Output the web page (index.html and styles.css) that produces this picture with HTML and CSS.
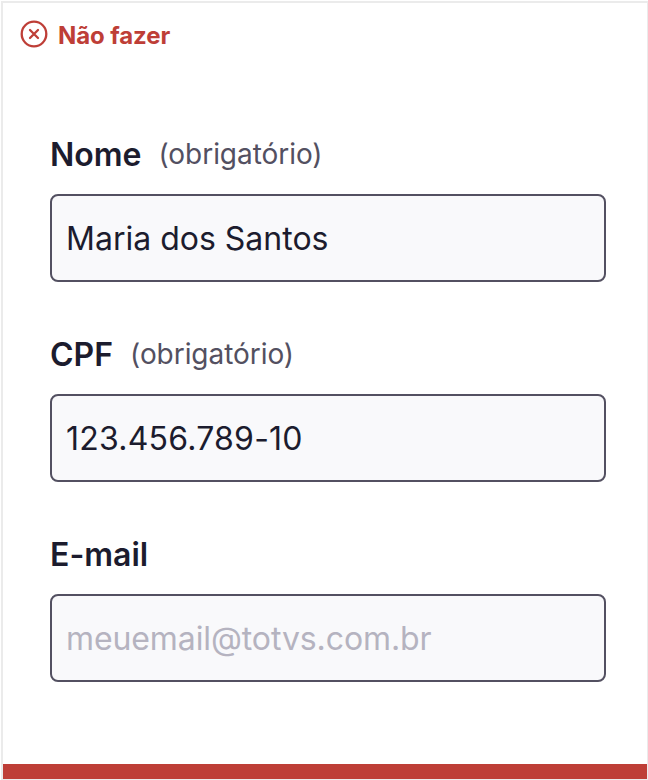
FILE: index.html
```html
<!DOCTYPE html>
<html lang="pt-BR">
<head>
<meta charset="utf-8">
<title>Não fazer</title>
<link rel="stylesheet" href="styles.css">
</head>
<body>
<main class="card">
  <header class="status">
    <svg class="status-icon" viewBox="0 0 28 28" fill="none" stroke="currentColor" stroke-width="2.3" stroke-linecap="round"><circle cx="14" cy="14" r="12.3"/><path d="M10 10l8 8M18 10l-8 8"/></svg>
    <span class="status-text">Não fazer</span>
  </header>
  <form class="form">
    <div class="field">
      <div class="caption"><label class="label" for="nome">Nome</label><span class="hint">(obrigatório)</span></div>
      <input class="input" id="nome" value="Maria dos Santos">
    </div>
    <div class="field">
      <div class="caption"><label class="label" for="cpf">CPF</label><span class="hint">(obrigatório)</span></div>
      <input class="input input-number" id="cpf" value="123.456.789-10">
    </div>
    <div class="field">
      <div class="caption"><label class="label" for="email">E-mail</label></div>
      <input class="input" id="email" placeholder="meuemail@totvs.com.br">
    </div>
  </form>
  <div class="bar"></div>
</main>
</body>
</html>
```

FILE: styles.css
```css
* { box-sizing: border-box; }
body { margin: 0; background: #fff; font-family: Inter, sans-serif; color: #1c1c2e; }
.card { display: flex; flex-direction: column; height: 779px; margin: 1px 0 0 1px; border: solid #ebebeb; border-width: 2px 1px 1px 2px; }
.status { display: flex; align-items: center; gap: 10px; height: 28px; margin: 17px 0 0 17px; color: #be3e37; font-size: 24px; font-weight: 700; letter-spacing: -0.1px; }
.status-icon { width: 28px; height: 28px; }
.status-text { padding-top: 2px; }
.form { display: grid; gap: 48px; margin: 82px 41px 0 47px; }
.field { height: 152px; display: flex; flex-direction: column; justify-content: space-between; }
.caption { display: flex; gap: 17px; height: 48px; line-height: 48px; }
.label { padding-top: 1px; font-size: 32px; font-weight: 600; }
.hint { font-size: 28px; color: #535061; letter-spacing: -0.05px; }
.input { width: 100%; height: 88px; padding: 0 14px; border: 2px solid #535061; border-radius: 8px; background: #f9f9fb; color: #1c1c2e; font: 400 32px Inter, sans-serif; }
.input-number { letter-spacing: 0.22px; }
.input::placeholder { color: #b5b3c0; opacity: 1; letter-spacing: -0.1px; }
.bar { height: 15px; margin-top: auto; background: #be3e37; }
```
